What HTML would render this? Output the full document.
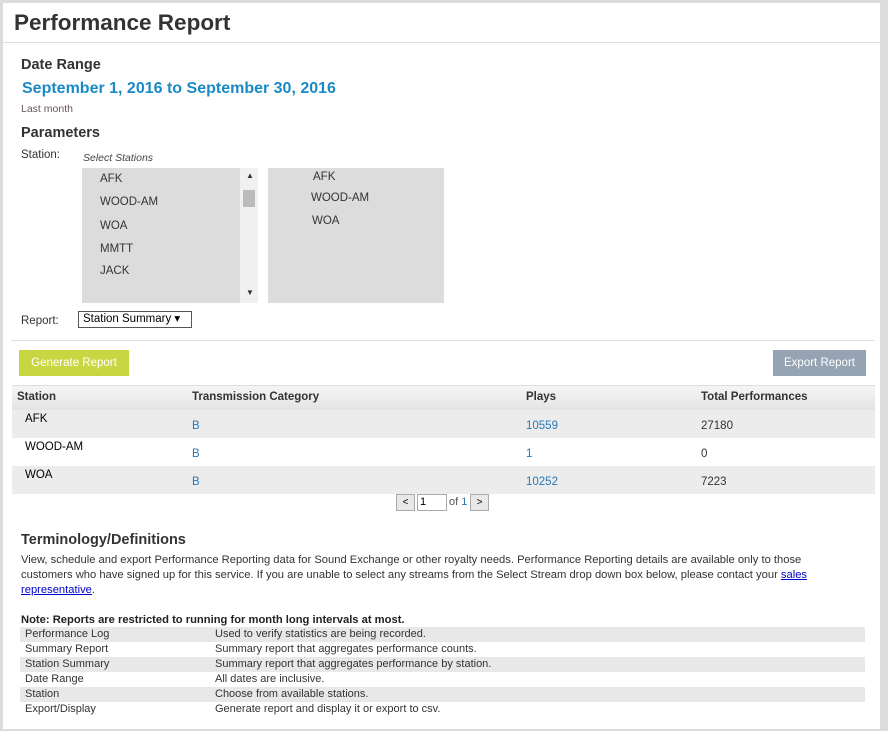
<!DOCTYPE html>
<html><head><style>
body{margin:0;width:888px;height:731px;background:#dcdcdc;font-family:"Liberation Sans",sans-serif;position:relative;overflow:hidden}
.page{position:absolute;left:3px;top:3px;width:877px;height:726px;background:#fff}
.a{position:absolute;white-space:nowrap}
h1{position:absolute;left:11px;top:7px;margin:0;font-size:22.5px;color:#333;font-weight:bold}
.hl{position:absolute;left:0;top:39px;width:877px;height:1px;background:#ddd}
.h2{font-size:14.5px;font-weight:bold;color:#333}
.s{font-size:11.5px;color:#333}
.box{position:absolute;background:#dcdcdc}
.tbl{position:absolute;left:9px;width:863px;font-size:12px;color:#222}
.blue{color:#2a78b4}
.def{position:absolute;left:17px;width:845px;height:15px;font-size:11px;color:#333}
.def span{position:absolute;top:1px}
</style></head><body>
<div class="page">
<h1>Performance Report</h1>
<div class="hl"></div>
<div class="a h2" style="left:18px;top:54px">Date Range</div>
<div class="a" style="left:19px;top:77px;font-size:16px;font-weight:bold;color:#1a8ac6">September 1, 2016 to September 30, 2016</div>
<div class="a" style="left:18px;top:100px;font-size:10.5px;color:#6b5555">Last month</div>
<div class="a h2" style="left:18px;top:122px">Parameters</div>
<div class="a s" style="left:18px;top:146px">Station:</div>
<div class="a" style="left:80px;top:149px;font-size:10.5px;font-style:italic;color:#444">Select Stations</div>
<div class="box" style="left:79px;top:165px;width:158px;height:135px"></div>
<div class="box" style="left:237px;top:165px;width:18px;height:135px;background:#f0f0f0"></div>
<div class="box" style="left:240px;top:187px;width:12px;height:17px;background:#bbb"></div>
<div class="a" style="left:243px;top:168px;font-size:8px;color:#333">▲</div>
<div class="a" style="left:243px;top:285px;font-size:8px;color:#333">▼</div>
<div class="a s" style="left:97px;top:170px">AFK</div>
<div class="a s" style="left:97px;top:193px">WOOD-AM</div>
<div class="a s" style="left:97px;top:217px">WOA</div>
<div class="a s" style="left:97px;top:240px">MMTT</div>
<div class="a s" style="left:97px;top:262px">JACK</div>
<div class="box" style="left:265px;top:165px;width:176px;height:135px"></div>
<div class="a s" style="left:310px;top:168px">AFK</div>
<div class="a s" style="left:308px;top:189px">WOOD-AM</div>
<div class="a s" style="left:309px;top:212px">WOA</div>
<div class="a s" style="left:18px;top:312px">Report:</div>
<div class="a" style="left:75px;top:308px;width:108px;height:15px;border:1px solid #555;font-size:11.5px;line-height:15px;padding-left:4px;color:#000">Station Summary ▾</div>
<div class="hl" style="top:337px;left:8px;width:863px"></div>
<div class="a" style="left:16px;top:347px;width:110px;height:26px;background:#c8d641;color:#fff;font-size:11.5px;line-height:26px;text-align:center">Generate Report</div>
<div class="a" style="left:770px;top:347px;width:93px;height:26px;background:#95a3b3;color:#fff;font-size:11.5px;line-height:26px;text-align:center">Export Report</div>
<div class="tbl" style="top:382px;height:24px;background:linear-gradient(#f5f5f5,#e4e4e4);border-top:1px solid #ddd"></div>
<div class="a" style="left:14px;top:388px;font-size:11.5px;font-weight:bold;color:#333">Station</div>
<div class="a" style="left:189px;top:388px;font-size:11.5px;font-weight:bold;color:#333">Transmission Category</div>
<div class="a" style="left:523px;top:388px;font-size:11.5px;font-weight:bold;color:#333">Plays</div>
<div class="a" style="left:698px;top:388px;font-size:11.5px;font-weight:bold;color:#333">Total Performances</div>
<div class="tbl" style="top:407px;height:28px;background:#ececec"></div>
<div class="tbl" style="top:463px;height:28px;background:#ececec"></div>
<div class="a s" style="left:22px;top:410px;color:#000">AFK</div>
<div class="a s blue" style="left:189px;top:417px">B</div><div class="a s blue" style="left:523px;top:417px">10559</div><div class="a s" style="left:698px;top:417px">27180</div>
<div class="a s" style="left:22px;top:438px;color:#000">WOOD-AM</div>
<div class="a s blue" style="left:189px;top:445px">B</div><div class="a s blue" style="left:523px;top:445px">1</div><div class="a s" style="left:698px;top:445px">0</div>
<div class="a s" style="left:22px;top:466px;color:#000">WOA</div>
<div class="a s blue" style="left:189px;top:473px">B</div><div class="a s blue" style="left:523px;top:473px">10252</div><div class="a s" style="left:698px;top:473px">7223</div>
<div class="a" style="left:393px;top:491px;width:17px;height:15px;border:1px solid #aaa;background:#e8e8e8;font-size:10px;text-align:center;line-height:15px">&lt;</div>
<div class="a" style="left:414px;top:491px;width:26px;height:15px;border:1px solid #aaa;background:#fff;font-size:11px;line-height:15px;padding-left:2px">1</div>
<div class="a" style="left:446px;top:493px;font-size:11px;color:#555">of <span class="blue">1</span></div>
<div class="a" style="left:467px;top:491px;width:17px;height:15px;border:1px solid #aaa;background:#e8e8e8;font-size:10px;text-align:center;line-height:15px">&gt;</div>
<div class="a" style="left:18px;top:529px;font-size:14.5px;font-weight:bold;color:#333">Terminology/Definitions</div>
<div class="a" style="left:18px;top:550px;width:810px;white-space:normal;font-size:11.2px;line-height:15px;color:#333">View, schedule and export Performance Reporting data for Sound Exchange or other royalty needs. Performance Reporting details are available only to those customers who have signed up for this service. If you are unable to select any streams from the Select Stream drop down box below, please contact your <span style="color:#00c;text-decoration:underline">sales representative</span>.</div>
<div class="a" style="left:18px;top:611px;font-size:11.2px;font-weight:bold;color:#222">Note: Reports are restricted to running for month long intervals at most.</div>
<div class="def" style="top:624px;background:#e8e8e8"><span style="left:5px">Performance Log</span><span style="left:195px">Used to verify statistics are being recorded.</span></div>
<div class="def" style="top:639px"><span style="left:5px">Summary Report</span><span style="left:195px">Summary report that aggregates performance counts.</span></div>
<div class="def" style="top:654px;background:#e8e8e8"><span style="left:5px">Station Summary</span><span style="left:195px">Summary report that aggregates performance by station.</span></div>
<div class="def" style="top:669px"><span style="left:5px">Date Range</span><span style="left:195px">All dates are inclusive.</span></div>
<div class="def" style="top:684px;background:#e8e8e8"><span style="left:5px">Station</span><span style="left:195px">Choose from available stations.</span></div>
<div class="def" style="top:699px"><span style="left:5px">Export/Display</span><span style="left:195px">Generate report and display it or export to csv.</span></div>
</div>
</body></html>
